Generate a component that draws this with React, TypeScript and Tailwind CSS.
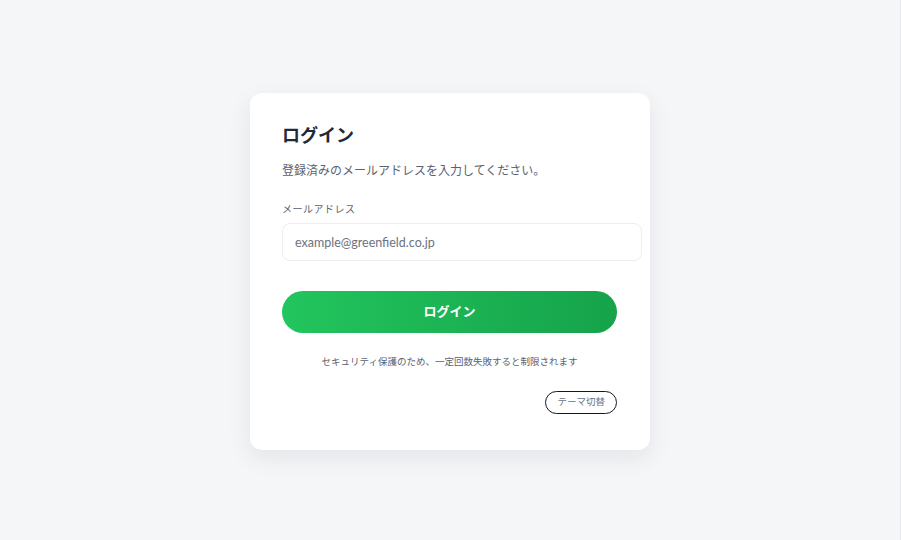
export default function App() {
  return (
    <div
      className="min-h-screen w-full bg-[#f5f6f8] border-r border-[#e6e7ea] flex justify-center pt-[93px]"
      style={{ fontFamily: 'Lato, "Noto Sans CJK JP", "Noto Sans", sans-serif' }}
    >
      <div className="w-[400px] h-[357px] bg-white rounded-xl shadow-[0_8px_24px_rgba(15,23,42,0.08)] pl-8 pr-[33px] pt-[30px]">
        <h1 className="text-[18px] leading-6 font-bold text-[#1e293b]">ログイン</h1>
        <p className="mt-[14px] text-[12px] leading-5 text-[#5b6270]">
          登録済みのメールアドレスを入力してください。
        </p>

        <label className="block mt-[20px] text-[10px] leading-4 tracking-wider text-[#5b6270]">
          メールアドレス
        </label>
        <input
          type="email"
          placeholder="example@greenfield.co.jp"
          className="mt-[6px] w-[360px] h-[38px] rounded-lg border border-[#eceef1] bg-white px-3 text-[12.5px] text-[#1e293b] placeholder:text-[#6b7280] outline-none"
        />

        <button className="mt-[30px] w-full h-[42px] rounded-full bg-gradient-to-r from-[#22c55e] to-[#16a34a] text-white text-[13px] font-bold">
          ログイン
        </button>

        <p className="mt-[21px] text-center text-[9.5px] leading-4 text-[#5b6270]">
          セキュリティ保護のため、一定回数失敗すると制限されます
        </p>

        <div className="mt-[21px] flex justify-end">
          <button className="h-[23px] px-[11px] rounded-full border-[1.5px] border-[#111827] text-[9.5px] text-[#6b7280]">
            テーマ切替
          </button>
        </div>
      </div>
    </div>
  );
}
